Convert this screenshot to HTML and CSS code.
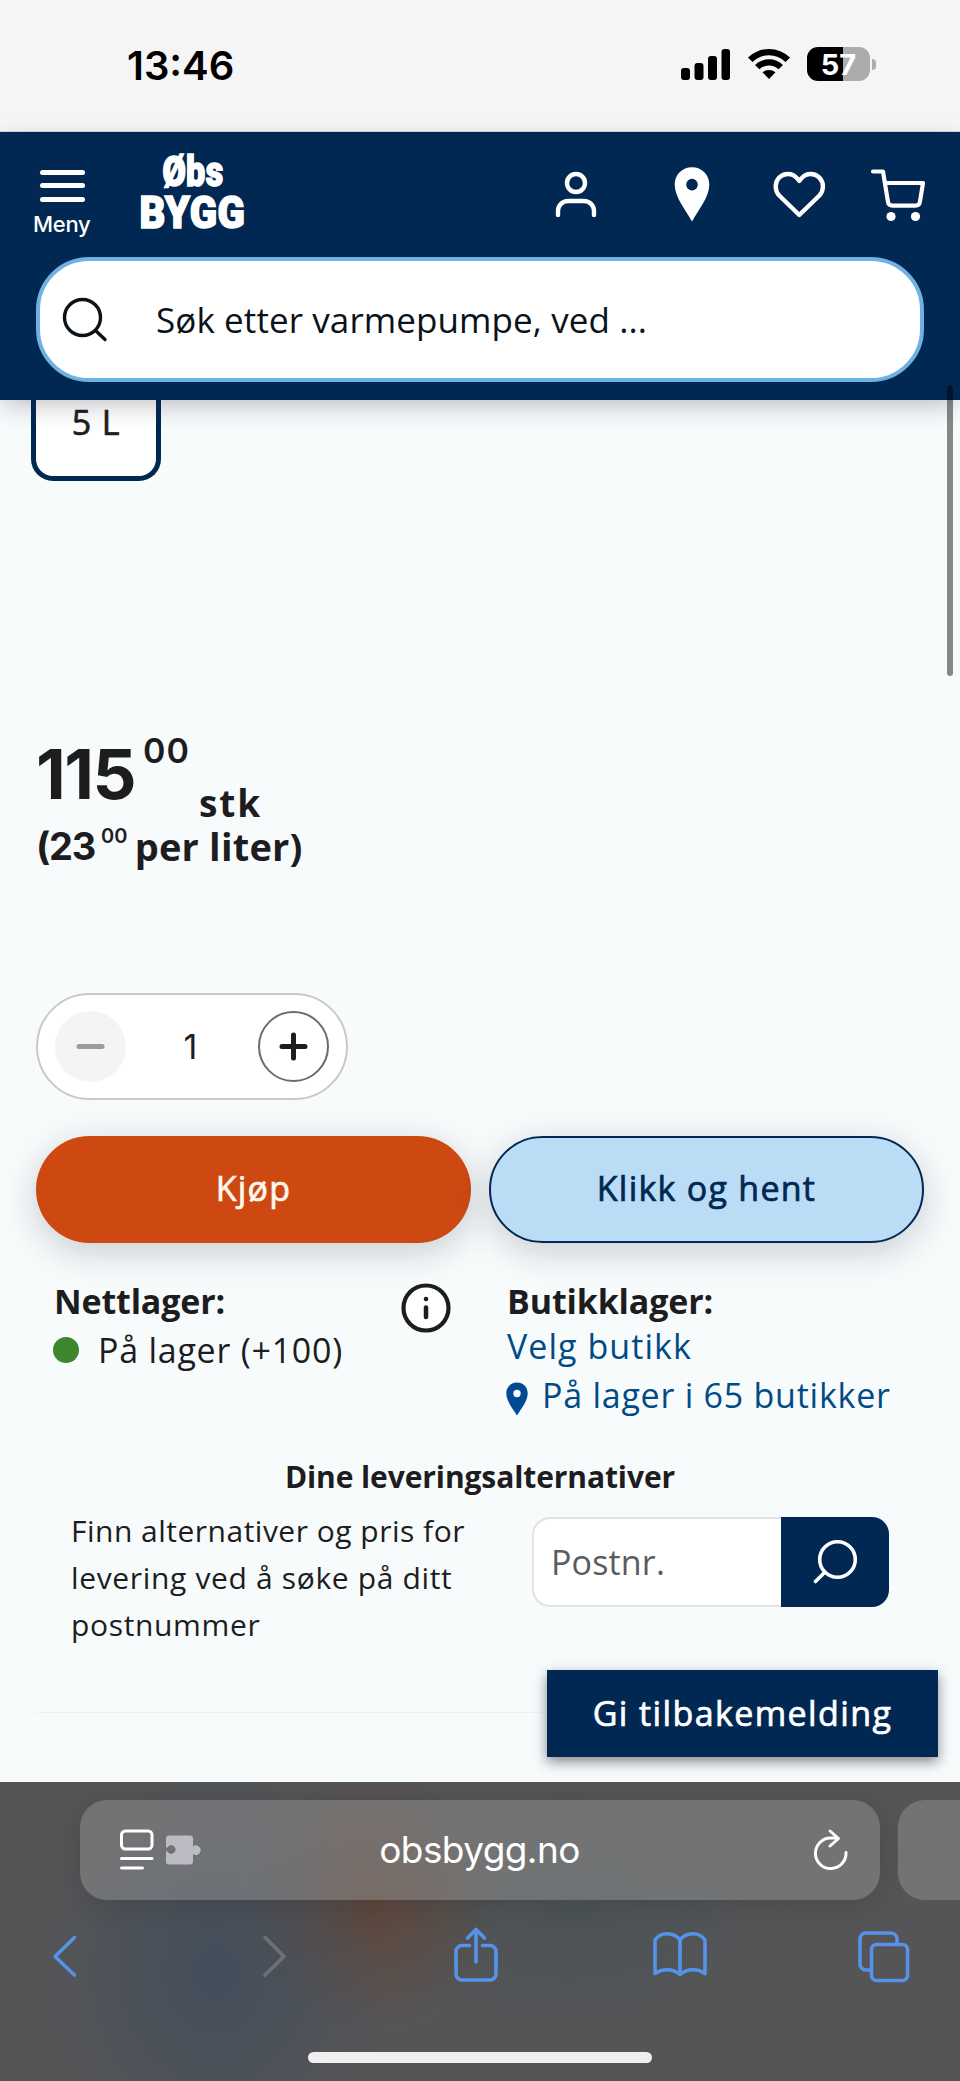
FILE: index.html
```html
<!DOCTYPE html>
<html lang="no">
<head>
<meta charset="utf-8">
<title>Obs BYGG</title>
<link rel="stylesheet" href="styles.css">
</head>
<body>
<div class="status">
  <span class="clock">13:46</span>
  <div class="status-icons">
    <svg class="signal" width="50" height="32" viewBox="0 0 50 32"><rect x="0" y="19" width="9" height="12" rx="3"/><rect x="13.500" y="14" width="9" height="17" rx="3"/><rect x="27" y="7" width="9" height="24" rx="3"/><rect x="40.500" y="0" width="8.500" height="31" rx="3"/></svg>
    <svg class="wifi" width="44" height="32" viewBox="0 0 44 32"><path d="M1 9.500A30 30 0 0 1 43 9.500L38.500 14A23.500 23.500 0 0 0 5.500 14Z"/><path d="M8 17A20 20 0 0 1 36 17L31.600 21.300A13.800 13.800 0 0 0 12.400 21.300Z"/><path d="M15.500 24.300A10 10 0 0 1 28.500 24.300L22 31Z"/></svg>
    <div class="battery">57</div><i class="battery-tip"></i>
  </div>
</div>
<header class="header">
  <div class="header-row">
    <div class="menu"><i></i><i></i><i></i><span>Meny</span></div>
    <div class="logo"><span class="logo-top">Øbs</span><span class="logo-bottom">BYGG</span></div>
    <nav class="nav">
      <svg width="42" height="54" viewBox="0 0 42 54"><g fill="none" stroke="#fff" stroke-width="4.400" stroke-linecap="round"><circle cx="21" cy="15" r="9"/><path d="M3 47v-4a10 10 0 0 1 10-10h16a10 10 0 0 1 10 10v4"/></g></svg>
      <svg class="nav-pin" width="36" height="54" viewBox="0 0 36 54"><path fill="#fff" fill-rule="evenodd" d="M18 -.700c10 0 17.300 7.500 17.300 17.200C35.300 29 25 41 18 53.500 11 41 .700 29 .700 16.500.700 6.800 8 -.700 18 -.700Zm0 11.500a5.800 5.800 0 1 0 0 11.600 5.800 5.800 0 0 0 0-11.600Z"/></svg>
      <svg class="nav-heart" width="54" height="54" viewBox="0 0 54 54"><path fill="none" stroke="#fff" stroke-width="4.400" stroke-linejoin="round" d="M27.300 47 7.200 27.500C2.500 22.500 2.500 14.500 7.200 9.600c5-5 13-4.800 17.500.300l2.600 2.900 2.600-2.900c4.500-5.100 12.500-5.300 17.500-.300 4.700 4.900 4.700 12.900 0 17.900Z"/></svg>
      <svg class="nav-cart" width="56" height="54" viewBox="0 0 56 54"><g fill="none" stroke="#fff" stroke-width="4.200" stroke-linecap="round" stroke-linejoin="round"><path d="M3 3.500h10l5 30.500q.6 3.700 4.500 3.700h23q3.800 0 4.400-3.700L53 15H15"/></g><circle cx="21" cy="48.500" r="4.600" fill="#fff"/><circle cx="45.500" cy="48.500" r="4.600" fill="#fff"/></svg>
    </nav>
  </div>
  <div class="search">
    <svg width="46" height="46" viewBox="0 0 46 46"><g fill="none" stroke="#0b1218" stroke-width="3.400" stroke-linecap="round"><circle cx="20.500" cy="20.500" r="18"/><path d="M33.500 33.500 43 42.500"/></g></svg>
    <span>Søk etter varmepumpe, ved ...</span>
  </div>
</header>
<i class="scrollbar"></i>
<main class="main">
  <div class="size">5 L</div>
  <div class="price">
    <span class="price-int">115</span><span class="price-dec">00</span><span class="price-unit">stk</span>
  </div>
  <div class="unit-price"><span class="digits">(23</span><sup>00</sup><span class="per">per liter)</span></div>
  <div class="stepper">
    <span class="round minus"><svg width="29" height="29" viewBox="0 0 29 29"><path d="M3 14.500h23" stroke="#9c9c9c" stroke-width="5" stroke-linecap="round"/></svg></span>
    <span class="qty">1</span>
    <span class="round plus"><svg width="29" height="29" viewBox="0 0 29 29"><path d="M3 14.500h23M14.500 3v23" stroke="#1d1d1f" stroke-width="5" stroke-linecap="round"/></svg></span>
  </div>
  <div class="actions">
    <div class="btn buy"><span>Kjøp</span></div>
    <div class="btn collect"><span>Klikk og hent</span></div>
  </div>
  <div class="stock">
    <div class="stock-web">
      <div>
        <b>Nettlager:</b>
        <p class="web-line"><i class="dot"></i><span>På lager (+100)</span></p>
      </div>
      <svg width="50" height="50" viewBox="0 0 50 50"><circle cx="25" cy="25" r="22.500" fill="#fff" stroke="#1d1d1f" stroke-width="4.200"/><circle cx="25" cy="16" r="2.300" fill="#1d1d1f"/><path d="M25 24.500v9.500" stroke="#1d1d1f" stroke-width="4.500" stroke-linecap="round"/></svg>
    </div>
    <div class="stock-shop">
      <b>Butikklager:</b>
      <p class="choose">Velg butikk</p>
      <p class="shop-line"><svg width="22" height="34" viewBox="0 0 22 34"><path fill="#004b93" fill-rule="evenodd" d="M11 .500C17 .500 21.700 5 21.700 11.300 21.700 19 15.500 26 11 33.500 6.500 26 .300 19 .300 11.300.300 5 5 .500 11 .500Zm0 7.300a3.700 3.700 0 1 0 0 7.400 3.700 3.700 0 0 0 0-7.400Z"/></svg><span>På lager i 65 butikker</span></p>
    </div>
  </div>
  <h2 class="delivery-title">Dine leveringsalternativer</h2>
  <div class="delivery">
    <p><span class="line-tight">Finn alternativer og pris for</span><br><span>levering ved å søke på ditt</span><br><span>postnummer</span></p>
    <div class="postal">
      <div class="postal-input">Postnr.</div>
      <div class="postal-btn"><svg width="46" height="46" viewBox="0 0 46 46"><g fill="none" stroke="#fff" stroke-width="3.600" stroke-linecap="round"><circle cx="25.500" cy="20.500" r="17.800"/><path d="M12.500 33.500 3.500 42.500"/></g></svg></div>
    </div>
  </div>
  <hr>
  <div class="feedback">Gi tilbakemelding</div>
</main>
<footer class="browser">
  <div class="tabs">
    <div class="url">
      <svg class="page-icon" width="82" height="42" viewBox="0 0 82 42"><g fill="none" stroke="#fff" stroke-width="3" stroke-linecap="round"><rect x="1.500" y="2" width="30.500" height="18" rx="4"/><path d="M1.500 29.500H32M1.500 39H22.500"/></g><path fill="#bcbbc4" fill-rule="evenodd" d="M49 6.500h21a3 3 0 0 1 3 3v8a4.700 4.700 0 1 1 0 7.500v7.500a3 3 0 0 1-3 3H49a3 3 0 0 1-3-3v-10h1.500a4.300 4.300 0 1 0 0-4H46v-9a3 3 0 0 1 3-3Z"/></svg>
      <span class="host">obsbygg.no</span>
      <svg class="reload" width="34" height="42" viewBox="0 0 34 42"><g fill="none" stroke="#fff" stroke-width="3" stroke-linecap="round" stroke-linejoin="round"><path d="M32 23.500A15.300 15.300 0 1 1 16.500 9h7.500M16 2l8.500 7.500L16 17"/></g></svg>
    </div>
    <div class="next-tab"></div>
  </div>
  <div class="tools">
    <svg class="t-back" width="26" height="42" viewBox="0 0 26 42"><path d="M22.500 2.500 3 21.500 22.500 40"/></svg>
    <svg class="t-fwd" width="26" height="42" viewBox="0 0 26 42"><path d="M3 2.500 22 21.500 3 40"/></svg>
    <svg class="t-share" width="44" height="56" viewBox="0 0 44 56"><path d="M15.500 18.500H8a6 6 0 0 0-6 6V47a6 6 0 0 0 6 6h28a6 6 0 0 0 6-6V24.500a6 6 0 0 0-6-6h-7.500M22 35V3M13.500 11 22 2.500 30.500 11"/></svg>
    <svg class="t-book" width="56" height="46" viewBox="0 0 56 46"><path d="M28 9C22 1 9 .500 3 9v33.500c7-5 18-5.500 25 1 7-6.500 18-6 25-1V9C47 .500 34 1 28 9Zm0 0v34.500"/></svg>
    <svg class="t-tabs" width="52" height="52" viewBox="0 0 52 52"><path d="M13 39H8a6 6 0 0 1-6-6V8a6 6 0 0 1 6-6h25a6 6 0 0 1 6 6v5"/><rect x="13.500" y="13.500" width="36" height="36" rx="5"/></svg>
  </div>
  <i class="home"></i>
</footer>
</body>
</html>
```
FILE: styles.css
```css
* { box-sizing: border-box; }
body { margin: 0; width: 960px; height: 2081px; overflow: hidden; position: relative; display: flex; flex-direction: column; background: #f7fbfc; color: #1d1d1f; font-family: "Open Sans", sans-serif; font-size: 34px; line-height: 48px; }
p, h2 { margin: 0; }
svg { display: block; flex: none; overflow: visible; }
span { white-space: nowrap; }
i { display: block; flex: none; }
b { display: block; font-weight: 700; letter-spacing: -.15px; }

.status { height: 132px; flex: none; background: #f5f5f5; border-bottom: 1px solid #c9dde6; display: flex; justify-content: space-between; padding: 41px 84px 0 127px; }
.clock { font: 600 40px/49px Inter, sans-serif; color: #000; }
.status-icons { display: flex; }
.signal { margin-top: 8px; }
.wifi { margin: 7px 16px 0 16px; }
.battery { width: 63px; height: 34px; margin-top: 6px; border-radius: 11px; background: linear-gradient(90deg, #000 36px, #acacac 36px); color: #fff; font: 700 29px/35px Inter, sans-serif; text-align: center; }
.battery-tip { width: 4px; height: 11px; margin: 18px 0 0 2px; background: #acacac; border-radius: 0 5px 5px 0; }

.header { height: 268px; flex: none; position: relative; z-index: 2; background: #002853; box-shadow: 0 8px 24px -4px rgba(40, 30, 50, .3); color: #fff; }
.header-row { height: 125px; display: flex; align-items: flex-start; padding: 0 34px 0 35px; }
.menu { width: 60px; padding: 37.500px 0 0 5px; }
.menu i { width: 45px; height: 5px; border-radius: 3px; background: #fff; margin-bottom: 8.500px; }
.menu span { display: block; margin: 3px 0 0 -7px; font: 500 22px/28px Inter, sans-serif; letter-spacing: -.3px; }
.logo { width: 107px; margin: 22px 0 0 44px; display: flex; flex-direction: column; align-items: center; font-family: Roboto, sans-serif; font-weight: 900; -webkit-text-stroke: 1.600px #fff; }
.logo-top { font-size: 42px; line-height: 36px; letter-spacing: .6px; transform: scaleX(.81); }
.logo-bottom { font-size: 45px; line-height: 42px; margin-top: 2px; letter-spacing: .5px; transform: scaleX(.89); }
.nav { margin: 36px 0 0 auto; display: flex; }
.nav-pin { margin-left: 77px; }
.nav-heart { margin-left: 62px; }
.nav-cart { margin-left: 44px; }
.search { height: 125px; margin: 0 36px; border: 4.500px solid #6fb1e2; border-radius: 53px; background: #fff; display: flex; align-items: center; padding-left: 22px; color: #0b1218; }
.search span { margin-left: 48px; font-size: 35px; letter-spacing: .09px; }
.scrollbar { position: absolute; z-index: 3; left: 947px; top: 385px; width: 6px; height: 291px; border-radius: 3px; background: rgba(0, 0, 0, .46); }

.main { height: 1382px; flex: none; position: relative; }
.size { width: 130px; height: 81px; margin-left: 31px; border: 5px solid #002853; border-top: 0; border-radius: 0 0 22px 22px; background: #fff; text-align: center; line-height: 44px; letter-spacing: .8px; -webkit-text-stroke: .7px; }
.price { height: 83px; margin: 258px 0 0 36px; display: flex; align-items: flex-start; }
.price-int { font: 700 69px/70px Inter, sans-serif; letter-spacing: -1.500px; }
.price-dec { font: 600 34px/34px Inter, sans-serif; margin: -5px 0 0 8px; letter-spacing: 1px; }
.price-unit { font-size: 37px; font-weight: 700; line-height: 36px; margin: 46px 0 0 9px; letter-spacing: 1.900px; }
.unit-price { height: 48px; margin-left: 37px; display: flex; align-items: flex-start; font-size: 38px; font-weight: 700; letter-spacing: .2px; }
.digits { font-family: Inter, sans-serif; letter-spacing: -1.300px; margin-left: -1px; }
.unit-price sup { font: 600 20px/20px Inter, sans-serif; margin: 4px 0 0 6px; letter-spacing: .2px; }
.per { margin-left: 7px; }
.stepper { width: 312px; height: 107px; margin: 123px 0 0 36px; padding: 0 17px; border: 2px solid #c9c9c9; border-radius: 54px; background: #fff; display: flex; align-items: center; justify-content: space-between; }
.round { width: 71px; height: 71px; border-radius: 50%; display: flex; align-items: center; justify-content: center; }
.minus { background: #f4f4f4; }
.plus { border: 2px solid #6b6b6b; }
.qty { font: 400 34px/48px Inter, sans-serif; margin-right: 3px; }
.actions { margin: 36px 36px 0; display: flex; gap: 18px; }
.btn { width: 435px; height: 107px; border-radius: 54px; display: flex; align-items: center; justify-content: center; padding-bottom: 3px; letter-spacing: 1.250px; box-shadow: 0 9px 36px rgba(30, 20, 30, .2); -webkit-text-stroke: .7px; }
.buy { background: #ce4812; color: #fff8ee; }
.collect { background: #badcf5; color: #002853; border: 2px solid #002853; }
.stock { margin: 34px 36px 0 54px; height: 142px; display: flex; letter-spacing: .75px; }
.stock-web { width: 397px; margin-right: 56px; display: flex; justify-content: space-between; }
.stock-web svg { margin-top: 6px; }
.web-line { display: flex; margin-top: 1px; }
.dot { width: 26px; height: 26px; border-radius: 50%; background: #3f872e; margin: 11px 19px 0 -1px; }
.choose, .shop-line { color: #004b85; }
.choose { margin-top: -3px; letter-spacing: 1.050px; }
.shop-line { display: flex; margin-top: 1px; }
.shop-line svg { margin: 11px 14px 0 -1px; }
.delivery-title { margin-top: 36px; text-align: center; font-size: 30px; line-height: 44px; font-weight: 700; letter-spacing: -.1px; }
.delivery { margin: 8px 71px 0 71px; display: flex; justify-content: space-between; font-size: 30px; line-height: 47px; letter-spacing: .65px; }
.line-tight { letter-spacing: .49px; }
.postal { width: 357px; height: 90px; margin-top: 10px; display: flex; }
.postal-input { flex: 1; border: 2px solid #e3e2e4; border-right: 0; border-radius: 18px 0 0 18px; background: #fff; color: #5c5c5c; font-size: 34px; line-height: 87px; padding-left: 17px; letter-spacing: .15px; }
.postal-btn { width: 108px; background: #002853; border-radius: 0 17px 17px 0; display: flex; align-items: center; justify-content: center; }
hr { margin: 64px 36px 0; border: 0; height: 1px; background: #eff1f3; }
.feedback { position: absolute; left: 547px; top: 1270px; width: 391px; height: 87px; background: #002853; color: #fff; line-height: 86px; text-align: center; letter-spacing: 1.400px; -webkit-text-stroke: .7px; box-shadow: 0 5px 12px rgba(30, 20, 30, .5); }

.browser { height: 299px; flex: none; background: radial-gradient(ellipse 170px 200px at 215px 190px, rgba(62, 76, 92, .8), rgba(62, 76, 92, 0)), radial-gradient(ellipse 130px 130px at 370px 120px, rgba(98, 66, 50, .75), rgba(98, 66, 50, 0)), radial-gradient(ellipse 220px 130px at 570px 130px, rgba(72, 82, 86, .7), rgba(72, 82, 86, 0)), #555557; }
.tabs { display: flex; gap: 18px; padding: 18px 0 0 80px; }
.url { width: 800px; flex: none; height: 100px; border-radius: 27px; background: rgba(152, 152, 152, .45); display: flex; align-items: center; justify-content: space-between; padding: 0 32px 0 40px; box-shadow: 0 4px 30px rgba(0, 0, 0, .14); }
.host { font: 400 37px/48px Inter, sans-serif; color: #fff; letter-spacing: -.6px; margin-right: 69px; }
.reload { margin-left: -12px; }
.next-tab { width: 62px; height: 100px; border-radius: 27px 0 0 27px; background: rgba(152, 152, 152, .45); }
.tools { height: 113px; display: flex; align-items: flex-start; padding: 27px 50px 0 52px; fill: none; stroke: #5593ea; stroke-width: 3.600; stroke-linecap: round; stroke-linejoin: round; }
.t-back { margin-top: 8px; }
.t-fwd { margin: 8px 0 0 184px; stroke: #707173; }
.t-share { margin-left: 166px; }
.t-book { margin: 4px 0 0 154px; }
.t-tabs { margin: 4px 0 0 auto; }
.home { width: 344px; height: 11px; margin: 39px auto 0; border-radius: 6px; background: #efeff0; }
```
